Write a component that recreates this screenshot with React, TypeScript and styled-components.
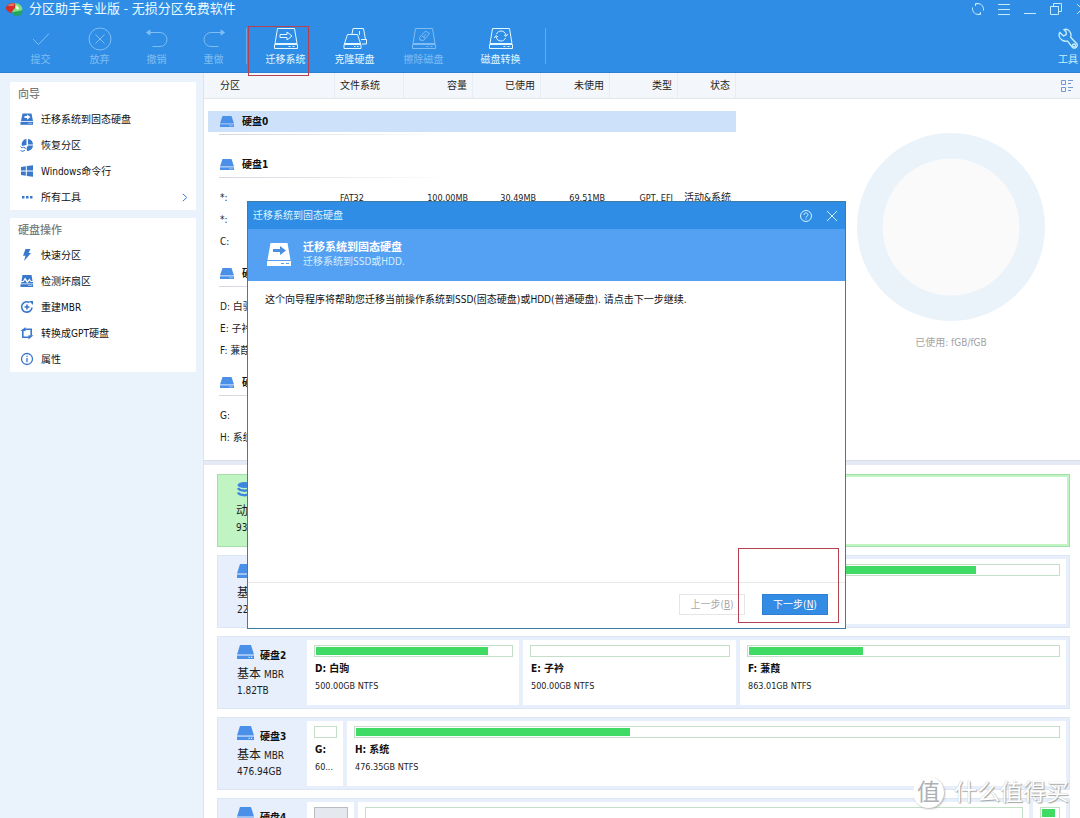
import React from 'react';
import styled, { createGlobalStyle, css } from 'styled-components';

const GlobalStyle = createGlobalStyle`
  *, *::before, *::after { box-sizing: border-box; }
  body { margin: 0; background: #fff; }
  body, button, table {
    font-family: "DejaVu Sans Condensed", "Noto Sans CJK SC", sans-serif;
    font-size: 10px;
    line-height: 14px;
    color: #1c1c1c;
  }
  button { background: none; border: 0; padding: 0; margin: 0; cursor: pointer; }
  svg { display: block; flex: none; }
`;

const Window = styled.div`
  position: relative;
  display: flex;
  flex-direction: column;
  height: 100vh;
  overflow: hidden;
  background: #fff;
`;

const TopBar = styled.header`
  flex: none;
  height: 73px;
  overflow: hidden;
  background: #2f8de6;
  border-bottom: 1px solid #2a7fd2;
`;

const TitleBar = styled.div`
  display: flex;
  align-items: center;
  height: 18px;
  padding-left: 5px;
`;

const WindowTitle = styled.h1`
  flex: 1;
  margin: 0 0 0 6px;
  font-size: 13px;
  line-height: 18px;
  font-weight: 400;
  color: #e9fbff;
  white-space: nowrap;
`;

const WindowControls = styled.div`
  display: flex;
  margin-right: -15px;
`;

const ControlButton = styled.button`
  display: flex;
  align-items: center;
  justify-content: center;
  width: 26px;
  height: 18px;
  color: #c5ecfb;
`;

const Toolbar = styled.nav`
  display: flex;
  height: 54px;
  padding: 9px 2px 0 12px;
`;

const ToolButton = styled.button<{ $wide?: boolean }>`
  display: flex;
  flex-direction: column;
  align-items: center;
  gap: 2px;
  width: ${(p) => (p.$wide ? 69 : 57)}px;
  height: 44px;
  color: #e4f8ff;
  white-space: nowrap;
  &:disabled { color: #80bdf2; cursor: default; }
`;

const ToolSeparator = styled.span`
  width: 1px;
  height: 36px;
  margin: 1px 4px 0;
  background: #62abee;
`;

const ToolGap = styled.span<{ $w: number }>`
  width: ${(p) => p.$w}px;
`;

const ToolsMenu = styled.button`
  display: flex;
  flex-direction: column;
  align-items: center;
  gap: 2px;
  height: 44px;
  margin-left: auto;
  color: #c9f1fb;
`;

const Body = styled.div`
  display: flex;
  flex: 1;
  min-height: 0;
`;

const Sidebar = styled.aside`
  display: flex;
  flex: none;
  flex-direction: column;
  gap: 8px;
  width: 204px;
  padding: 9px 7px 0 10px;
  background: #eaf2fc;
  border-right: 1px solid #d8e4f1;
`;

const SideCard = styled.section`
  background: #fff;
`;

const SideTitle = styled.h2`
  margin: 0;
  padding: 2px 8px 0;
  font-size: 11px;
  line-height: 22px;
  font-weight: 500;
  color: #7b7b7b;
`;

const SideItem = styled.button`
  display: flex;
  align-items: center;
  gap: 7px;
  width: 100%;
  height: 26px;
  padding: 0 8px 0 10px;
  color: #111;
  text-align: left;
  white-space: nowrap;
  & > svg { color: #3a78cb; }
  & > span { flex: 1; padding-top: 1px; }
`;

const Main = styled.main`
  display: flex;
  flex: 1;
  flex-direction: column;
  min-width: 0;
`;

const ListPanel = styled.section`
  display: flex;
  flex: none;
  padding-bottom: 13px;
  background: #fff;
`;

const headerStrip = css`
  height: 26px;
  background: #f3f6fb;
  border-bottom: 1px solid #e3e6ea;
`;

const PartitionTable = styled.table`
  flex: none;
  width: 532px;
  table-layout: fixed;
  border-collapse: separate;
  border-spacing: 0;
`;

const HeadCell = styled.th<{ $w: number; $left?: boolean; $first?: boolean }>`
  ${headerStrip}
  width: ${(p) => p.$w}px;
  padding: 0 5px 0 ${(p) => (p.$first ? 16 : 5)}px;
  border-right: 1px solid #e8ecf3;
  font-weight: 400;
  text-align: ${(p) => (p.$left || p.$first ? 'left' : 'right')};
`;

const Cell = styled.td<{ $left?: boolean; $first?: boolean }>`
  height: 22px;
  padding: 3px 5px 0 ${(p) => (p.$first ? 16 : 5)}px;
  font-size: 9px;
  text-align: ${(p) => (p.$left || p.$first ? 'left' : 'right')};
  white-space: nowrap;
  & > span { font-size: 10px; }
`;

const DiskCell = styled.td`
  height: 43px;
  padding: 2px 0 0;
`;

const DiskHeading = styled.div<{ $selected?: boolean }>`
  display: flex;
  align-items: center;
  gap: 8px;
  height: 21px;
  margin: 2px 0 0 4px;
  padding: 1px 0 0 12px;
  font-weight: 700;
  color: #111;
  background: ${(p) => (p.$selected ? '#cde1fb' : 'transparent')};
`;

const DiskRule = styled.div`
  height: 1px;
  margin: 2px 0 0 15px;
  width: 236px;
  background: linear-gradient(90deg, #d3d8de, #ffffff);
`;

const UsagePanel = styled.div`
  flex: 1;
  min-width: 0;
`;

const UsageHeader = styled.div`
  ${headerStrip}
  display: flex;
  align-items: center;
  justify-content: flex-end;
  padding-right: 7px;
`;

const Usage = styled.figure`
  display: flex;
  flex-direction: column;
  align-items: center;
  gap: 15px;
  margin: 0;
  padding: 34px 0 0 86px;
  color: #a3a3a3;
`;

const Splitter = styled.div`
  flex: none;
  height: 5px;
  background: #e6eaf4;
  border-top: 1px solid #d9deea;
`;

const DiskMap = styled.section`
  display: flex;
  flex: 1;
  flex-direction: column;
  gap: 8px;
  min-height: 0;
  overflow: hidden;
  padding: 9px 10px 0 13px;
`;

const DiskCard = styled.article<{ $dynamic?: boolean }>`
  display: flex;
  flex: none;
  gap: 4px;
  height: 73px;
  padding: ${(p) => (p.$dynamic ? 2 : 3)}px;
  background: ${(p) => (p.$dynamic ? '#c0f4c3' : '#e6effb')};
  border: 1px solid ${(p) => (p.$dynamic ? '#a5deac' : '#dce7f3')};
`;

const DiskLabel = styled.div`
  flex: none;
  width: 82px;
  padding: 5px 0 0 16px;
  line-height: 16px;
`;

const DiskName = styled.div`
  display: flex;
  gap: 6px;
  height: 21px;
  font-weight: 700;
  line-height: 22px;
  color: #111;
`;

const DiskKind = styled.div`
  & > span { font-size: 12px; }
`;

const Partition = styled.div<{ $grow?: number; $w?: number }>`
  flex: ${(p) => (p.$w ? `0 0 ${p.$w}px` : `${p.$grow ?? 1} 1 0`)};
  min-width: 0;
  overflow: hidden;
  padding: 5px 6px 0 7px;
  background: #fff;
  white-space: nowrap;
`;

const Bar = styled.div<{ $empty?: boolean }>`
  height: 12px;
  padding: 1px;
  background: ${(p) => (p.$empty ? '#e6e8f0' : '#fff')};
  border: 1px solid ${(p) => (p.$empty ? '#b9bcc2' : '#c3dfc8')};
`;

const Fill = styled.div`
  height: 8px;
  background: #3fdb64;
`;

const PartitionName = styled.div`
  margin: 5px 0 0 1px;
  font-weight: 700;
  color: #111;
`;

const PartitionSize = styled.div`
  margin: 3px 0 0 1px;
  font-size: 9px;
`;

const Dialog = styled.div`
  position: absolute;
  top: 201px;
  left: 247px;
  z-index: 2;
  display: flex;
  flex-direction: column;
  width: 599px;
  height: 428px;
  background: #fff;
  border: 1px solid #3c7da6;
`;

const DialogTitleBar = styled.div`
  display: flex;
  align-items: center;
  height: 27px;
  padding-left: 5px;
  background: #2f8de6;
  color: #d9f6ff;
`;

const DialogTitle = styled.span`
  flex: 1;
`;

const DialogBanner = styled.div`
  display: flex;
  align-items: center;
  gap: 12px;
  height: 52px;
  padding-left: 19px;
  background: #54a1f3;
  color: #d3ecff;
`;

const BannerTitle = styled.h2`
  margin: 0;
  font-size: 11px;
  line-height: 14px;
  font-weight: 700;
  color: #fff;
`;

const DialogText = styled.p`
  flex: 1;
  margin: 0;
  padding: 12px 17px;
  color: #111;
  white-space: nowrap;
`;

const DialogFooter = styled.div`
  display: flex;
  justify-content: flex-end;
  gap: 17px;
  height: 46px;
  padding: 11px 17px 0;
  border-top: 1px solid #e6e8ea;
`;

const DialogButton = styled.button`
  width: 66px;
  height: 21px;
  color: #fff;
  background: #338ce4;
  border: 1px solid #2f7fd4;
  &:disabled {
    color: #a9a9a9;
    background: #fff;
    border-color: #e3e5e6;
  }
`;

const DialogIconButton = styled(ControlButton)`
  height: 24px;
  color: #d3f4ff;
`;

const HighlightFrame = styled.div<{ $x: number; $y: number; $w: number; $h: number }>`
  position: absolute;
  z-index: 3;
  left: ${(p) => p.$x}px;
  top: ${(p) => p.$y}px;
  width: ${(p) => p.$w}px;
  height: ${(p) => p.$h}px;
  border: 1px solid #b5414f;
  pointer-events: none;
`;

const Watermark = styled.div`
  position: absolute;
  right: 11px;
  bottom: 10px;
  z-index: 4;
  display: flex;
  align-items: center;
  gap: 10px;
  font-size: 23px;
  line-height: 32px;
  color: #fff;
  text-shadow: 1px 1px 1px #a2a2a2, 0 0 1px #b4b4b4;
`;

const WatermarkSeal = styled.span`
  width: 31px;
  height: 31px;
  border-radius: 50%;
  background: #fff;
  box-shadow: 1px 1px 2px #b4b4b4;
  color: #aeb0b3;
  font-size: 23px;
  line-height: 30px;
  text-align: center;
  text-shadow: none;
`;

type IconProps = { children: React.ReactNode; w?: number; h?: number; box?: string; sw?: number };
const Line = ({ children, w = 24, h = 24, box, sw = 1 }: IconProps) => (
  <svg width={w} height={h} viewBox={box ?? `0 0 ${w} ${h}`} fill="none" stroke="currentColor" strokeWidth={sw} aria-hidden="true">
    {children}
  </svg>
);
const Solid = ({ children, w = 14, h = 14 }: IconProps) => (
  <svg width={w} height={h} viewBox={`0 0 ${w} ${h}`} fill="currentColor" aria-hidden="true">
    {children}
  </svg>
);

const LogoIcon = () => (
  <svg width="18" height="16" viewBox="0 0 18 16" aria-hidden="true">
    <ellipse cx="11.500" cy="7.500" rx="6" ry="5" fill="#7be07c" transform="rotate(28 11.500 7.500)" />
    <path d="M7 12c2-2 7-1 10.500-3 .5 3-2 6-5.500 6-2.500 0-4.500-1.500-5-3z" fill="#23a35c" />
    <path d="M1 6.500C2 3 6 1.500 10 2.500l.5 3.500L6 12C3 11 .5 9 1 6.500z" fill="#d42d2c" />
    <path d="M2.500 5C4.500 2.500 7 2 9.500 2.800L8.500 5z" fill="#e8785c" />
    <path d="M10 5.500l2-1 2.500 3-2.500 1.500z" fill="#e4f9dc" />
  </svg>
);

const DriveShape = () => (
  <>
    <path d="M3.500 1.500h17l2.500 15H1z" />
    <path d="M.5 17.500h23v4H.5z" />
    <path d="M1 16.500h22M14.500 19.500h2M18.500 19.500h2" />
  </>
);

const MigrateIcon = () => (
  <Line>
    <DriveShape />
    <path d="M6 7.500h7V5l5 4-5 4v-2.500H6z" />
  </Line>
);
const CloneIcon = () => (
  <Line>
    <path d="M9 7l1-5.500h10.500l2 11M18 12.500h5.500v4.500H19M16.500 4v4" />
    <path d="M4.500 7.500h10l3 9H1.500zM1 17.500h17v4H1zM1.500 16.500h16M11 19.500h1.500M14 19.500h1.500" />
  </Line>
);
const WipeIcon = () => (
  <Line>
    <DriveShape />
    <path d="M7.500 10.500l6-6.500 4 2.500-6 7-3.500-.5zM10 9l3.500 2.500M11.500 10l2.500-3" />
  </Line>
);
const ConvertIcon = () => (
  <Line>
    <DriveShape />
    <path d="M7.500 7C8.500 5 10 4 12 4c2.500 0 4.500 1.500 5 4.500M16.500 11c-1 2-2.500 3-4.500 3-2.500 0-4.500-1.500-5-4.500" />
    <path d="M15 8l2 1.500L18.700 7M9 10L7 8.500 5.300 11" />
  </Line>
);
const CheckIcon = () => <Line><path d="M4 12l5.500 5.500L20 6.500" /></Line>;
const DiscardIcon = () => <Line><circle cx="12" cy="12" r="11" /><path d="M7.500 7.500l9 9M16.500 7.500l-9 9" /></Line>;
const UndoIcon = () => <Line><path d="M2 5.500h13a7 7 0 0 1 0 14H7.500" /><path d="M5 3v5L1.500 5.500z" fill="currentColor" /></Line>;
const RedoIcon = () => <Line><path d="M22 5.500H9a7 7 0 0 0 0 14h7.500" /><path d="M19 3v5l3.500-2.500z" fill="currentColor" /></Line>;
const WrenchIcon = () => (
  <Line w={20} sw={1.3}>
    <path d="M6 2.500C9 1.500 12 3.500 12.800 6.500c.3 1.500.2 2.500-.2 3.800l6 6.200c2 2.500-1.500 6-4 4l-5.100-6.500C6 15 1.500 12.500 1 8.500c0-1.500.3-2.500.8-3L5.500 9l2.700-1.500V5z" />
    <circle cx="16" cy="18.500" r="1.500" />
  </Line>
);

const SyncIcon = () => (
  <Line w={14} h={14}>
    <path d="M5 2C9 .5 13 3.500 12.500 8.500M9 12C5 13.500 1 10.500 1.500 5.500" />
    <path d="M7.500 1.500h-3v2.500M6.500 12.500h3V10" />
  </Line>
);
const MenuIcon = () => <Line w={12} h={12}><path d="M0 1.500h12M0 6.500h12M0 11.500h12" /></Line>;
const MinimizeIcon = () => <Line w={12} h={12}><path d="M0 10.500h12" /></Line>;
const RestoreIcon = () => <Line w={12} h={12}><path d="M.5 3.500h8v8h-8zM3.500 3V.5h8v8H9" /></Line>;
const CloseIcon = () => <Line w={12} h={12}><path d="M1 1l10 10M11 1L1 11" /></Line>;
const HelpIcon = () => (
  <Line w={12} h={12}>
    <circle cx="6" cy="6" r="5.500" />
    <path d="M4 5c0-3 4-2.500 4 0 0 1-2 1.300-2 2.500M6 8.500v1" />
  </Line>
);

const ViewIcon = () => (
  <svg width="12" height="13" viewBox="0 0 12 13" fill="none" stroke="#6f9bd0" aria-hidden="true">
    <path d="M.5 1.500h4v4h-4zM.5 8.500h4v4h-4zM7 1.500h5M7 4.500h3M7 8.500h5M7 11.500h3" />
  </svg>
);

const DriveIcon = ({ tall = false }: { tall?: boolean }) => (
  <svg width={tall ? 17 : 14} height={tall ? 14 : 11} viewBox="0 0 14 11" preserveAspectRatio="none" aria-hidden="true">
    <path d="M2.500 0h9L14 7.500H0z" fill="#4a8fe8" />
    <path d="M0 8.300h14V11H0z" fill="#4a8fe8" />
    <path d="M9.500 9.200h1v1h-1zM11.500 9.200h1v1h-1z" fill="#dcebfd" />
  </svg>
);
const CylinderIcon = () => (
  <svg width="17" height="15" viewBox="0 0 17 15" fill="none" aria-hidden="true">
    <ellipse cx="8.500" cy="3" rx="7" ry="3" fill="#3d86e0" />
    <path d="M2 6c2 3.500 11 3.500 13 0M2 10.500c2 3.500 11 3.500 13 0" stroke="#3d86e0" strokeWidth="2.500" />
  </svg>
);
const BannerDriveIcon = () => (
  <svg width="24" height="24" viewBox="0 0 24 24" aria-hidden="true">
    <path d="M3.500 0h17L23.500 17H.5z" fill="#fff" />
    <path d="M0 18h24v5H0z" fill="#fff" />
    <path d="M6 6h7V3l6 4.500-6 4.500V9H6z" fill="#4a90e2" />
    <path d="M14 20h3v1h-3zM19 20h3v1h-3zM0 17h24v1H0z" fill="#54a1f3" />
  </svg>
);

const SideMigrate = () => (
  <Solid><path fillRule="evenodd" d="M2.500 1.500h9L13 9H1zM4.500 4v2H7v1.800L10.500 5 7 2.500V4z" /><path d="M.5 9.800h12.500v3H.5z" /><path d="M8.500 10.800h1v1h-1zM10.500 10.800h1v1h-1z" fill="#fff" /></Solid>
);
const SideRecover = () => (
  <Solid>
    <path d="M6.500 1v6L2 8C1 4.500 3 1.500 6.500 1zM8 1c3 .3 5 2.500 5 5.500H8zM13 7.500c-.2 3-2.500 5.500-6 5.500L6.500 10 8 7.500z" />
    <path d="M.5 8.500L2 10c1-1 2.500-1 3.500.3L4 9.500M.5 12.500c1.500 1 3.500 1 4.500-.5" fill="none" stroke="currentColor" />
  </Solid>
);
const SideWindows = () => (
  <Solid><path d="M1 3l4.800-.7v4.200H1zM6.800 2.100L13 1.200v5.300H6.800zM1 7.500h4.800v4.200L1 11zM6.800 7.500H13v5.300l-6.200-.9z" /></Solid>
);
const SideMore = () => <Solid><path d="M2 6h2.500v2.500H2zM6 6h2.500v2.500H6zM10 6h2.500v2.500H10z" /></Solid>;
const SideBolt = () => <Solid><path d="M5.500 1h5L8.500 5H11L4 13l1.500-5.200H3z" /></Solid>;
const SideScan = () => (
  <Solid><path fillRule="evenodd" d="M2.500 1h9l1 6h-1.500L9.500 4.500 7.500 7 5 3.500 3 7H1.500z" /><path d="M1.500 8h2L5 6l2.300 3.200L9.500 6.500l1.200 1.500H13v1.500H1zM.5 10.300H13V13H.5z" /><path d="M8.500 11h1v1h-1zM10.500 11h1v1h-1z" fill="#fff" /></Solid>
);
const SideRebuild = () => (
  <Line w={14} h={14} sw={1.6}><path d="M12 7.500A5.200 5.200 0 1 1 9.500 2.500M7 4.500v5M4.500 7h5" /><path d="M9 1h4v4z" fill="currentColor" stroke="none" /></Line>
);
const SideConvert = () => (
  <Line w={14} h={14} sw={1.6}>
    <path d="M2.800 4v7.200H9M5 3.300h6.200v6.200" />
    <path d="M5.500 1v4.600L2.800 3.300zM8.500 9v4.500l2.700-2.300zM.5 5l2.300-2L5 5zM9 9.300h4.500l-2.300 2z" fill="currentColor" stroke="none" />
  </Line>
);
const SideInfo = () => (
  <Line w={14} h={14} sw={1.3}><circle cx="7" cy="7" r="5.500" /><path d="M7 6v4.200M7 3.700v1.300" /></Line>
);
const ChevronIcon = () => <Line w={6} h={9}><path d="M.8.800l4 3.700-4 3.700" /></Line>;

const wizardItems = [
  { icon: <SideMigrate />, label: '迁移系统到固态硬盘' },
  { icon: <SideRecover />, label: '恢复分区' },
  { icon: <SideWindows />, label: 'Windows命令行' },
  { icon: <SideMore />, label: '所有工具', more: true },
];
const diskItems = [
  { icon: <SideBolt />, label: '快速分区' },
  { icon: <SideScan />, label: '检测坏扇区' },
  { icon: <SideRebuild />, label: '重建MBR' },
  { icon: <SideConvert />, label: '转换成GPT硬盘' },
  { icon: <SideInfo />, label: '属性' },
];

const SideGroup = ({ title, items }: { title: string; items: { icon: React.ReactNode; label: string; more?: boolean }[] }) => (
  <SideCard>
    <SideTitle>{title}</SideTitle>
    {items.map((item) => (
      <SideItem key={item.label} type="button">
        {item.icon}
        <span>{item.label}</span>
        {item.more && <ChevronIcon />}
      </SideItem>
    ))}
  </SideCard>
);

const groups: { disk: string; selected?: boolean; rows: string[][] }[] = [
  { disk: '硬盘0', selected: true, rows: [] },
  {
    disk: '硬盘1',
    rows: [['*:', 'FAT32', '100.00MB', '30.49MB', '69.51MB', 'GPT, EFI', '活动&系统'], ['*:'], ['C:']],
  },
  { disk: '硬盘2', rows: [['D: 白驹'], ['E: 子衿'], ['F: 蒹葭']] },
  { disk: '硬盘3', rows: [['G:'], ['H: 系统']] },
];

const DiskInfo = ({ name, kind, scheme, size, icon }: { name: string; kind: string; scheme?: string; size: string; icon?: React.ReactNode }) => (
  <DiskLabel>
    <DiskName>{icon ?? <DriveIcon tall />}{name}</DiskName>
    <DiskKind><span>{kind}</span> {scheme}</DiskKind>
    <div>{size}</div>
  </DiskLabel>
);

type PartProps = { name?: string; size?: string; used?: number; grow?: number; w?: number; empty?: boolean };
const Part = ({ name, size, used = 0, grow, w, empty }: PartProps) => (
  <Partition $grow={grow} $w={w}>
    <Bar $empty={empty}>{used > 0 && <Fill style={{ width: `${used}%` }} />}</Bar>
    {name && <PartitionName>{name}</PartitionName>}
    {size && <PartitionSize>{size}</PartitionSize>}
  </Partition>
);

export default function App() {
  return (
    <Window>
      <GlobalStyle />
      <TopBar>
        <TitleBar>
          <LogoIcon />
          <WindowTitle>分区助手专业版 - 无损分区免费软件</WindowTitle>
          <WindowControls>
            <ControlButton type="button" aria-label="刷新"><SyncIcon /></ControlButton>
            <ControlButton type="button" aria-label="菜单"><MenuIcon /></ControlButton>
            <ControlButton type="button" aria-label="最小化"><MinimizeIcon /></ControlButton>
            <ControlButton type="button" aria-label="还原"><RestoreIcon /></ControlButton>
            <ControlButton type="button" aria-label="关闭"><CloseIcon /></ControlButton>
          </WindowControls>
        </TitleBar>
        <Toolbar>
          <ToolButton type="button" disabled><CheckIcon />提交</ToolButton>
          <ToolGap $w={2} />
          <ToolButton type="button" disabled><DiscardIcon />放弃</ToolButton>
          <ToolButton type="button" disabled><UndoIcon />撤销</ToolButton>
          <ToolButton type="button" disabled><RedoIcon />重做</ToolButton>
          <ToolSeparator />
          <ToolButton type="button" $wide><MigrateIcon />迁移系统</ToolButton>
          <ToolButton type="button" $wide><CloneIcon />克隆硬盘</ToolButton>
          <ToolButton type="button" $wide disabled><WipeIcon />擦除磁盘</ToolButton>
          <ToolGap $w={8} />
          <ToolButton type="button" $wide><ConvertIcon />磁盘转换</ToolButton>
          <ToolGap $w={6} />
          <ToolSeparator />
          <ToolsMenu type="button"><WrenchIcon />工具</ToolsMenu>
        </Toolbar>
      </TopBar>

      <Body>
        <Sidebar>
          <SideGroup title="向导" items={wizardItems} />
          <SideGroup title="硬盘操作" items={diskItems} />
        </Sidebar>

        <Main>
          <ListPanel>
            <PartitionTable>
              <thead>
                <tr>
                  <HeadCell $w={131} $first>分区</HeadCell>
                  <HeadCell $w={69} $left>文件系统</HeadCell>
                  <HeadCell $w={69}>容量</HeadCell>
                  <HeadCell $w={68}>已使用</HeadCell>
                  <HeadCell $w={69}>未使用</HeadCell>
                  <HeadCell $w={68}>类型</HeadCell>
                  <HeadCell $w={58}>状态</HeadCell>
                </tr>
              </thead>
              {groups.map((group) => (
                <tbody key={group.disk}>
                  <tr>
                    <DiskCell colSpan={7}>
                      <DiskHeading $selected={group.selected}><DriveIcon />{group.disk}</DiskHeading>
                      <DiskRule />
                    </DiskCell>
                  </tr>
                  {group.rows.map((row, i) => (
                    <tr key={i}>
                      {Array.from({ length: 7 }, (_, c) => (
                        <Cell key={c} $first={c === 0} $left={c === 1}>
                          {c === 6 || c === 0 ? <span>{row[c]}</span> : row[c]}
                        </Cell>
                      ))}
                    </tr>
                  ))}
                </tbody>
              ))}
            </PartitionTable>
            <UsagePanel>
              <UsageHeader><ViewIcon /></UsageHeader>
              <Usage>
                <svg width="188" height="188" viewBox="0 0 188 188" aria-hidden="true">
                  <circle cx="94" cy="94" r="94" fill="#eaf2fa" />
                  <circle cx="94" cy="94" r="68.500" fill="#fafafa" />
                </svg>
                <figcaption>已使用: fGB/fGB</figcaption>
              </Usage>
            </UsagePanel>
          </ListPanel>

          <Splitter />

          <DiskMap>
            <DiskCard $dynamic>
              <DiskInfo name="硬盘0" kind="动态" scheme="MBR" size="931.51GB" icon={<CylinderIcon />} />
              <Partition />
            </DiskCard>
            <DiskCard>
              <DiskInfo name="硬盘1" kind="基本" scheme="GPT" size="223.57GB" />
              <Part used={89} />
            </DiskCard>
            <DiskCard>
              <DiskInfo name="硬盘2" kind="基本" scheme="MBR" size="1.82TB" />
              <Part name="D: 白驹" size="500.00GB NTFS" used={88} grow={199} />
              <Part name="E: 子衿" size="500.00GB NTFS" grow={200} />
              <Part name="F: 蒹葭" size="863.01GB NTFS" used={37} grow={313} />
            </DiskCard>
            <DiskCard>
              <DiskInfo name="硬盘3" kind="基本" scheme="MBR" size="476.94GB" />
              <Part name="G:" size="60..." w={36} />
              <Part name="H: 系统" size="476.35GB NTFS" used={39} />
            </DiskCard>
            <DiskCard>
              <DiskInfo name="硬盘4" kind="基本" scheme="MBR" size="14.91GB" />
              <Part w={47} empty />
              <Part />
              <Part w={33} used={80} />
            </DiskCard>
          </DiskMap>
        </Main>
      </Body>

      <Dialog role="dialog" aria-label="迁移系统到固态硬盘">
        <DialogTitleBar>
          <DialogTitle>迁移系统到固态硬盘</DialogTitle>
          <DialogIconButton type="button" aria-label="帮助"><HelpIcon /></DialogIconButton>
          <DialogIconButton type="button" aria-label="关闭"><CloseIcon /></DialogIconButton>
        </DialogTitleBar>
        <DialogBanner>
          <BannerDriveIcon />
          <div>
            <BannerTitle>迁移系统到固态硬盘</BannerTitle>
            迁移系统到SSD或HDD.
          </div>
        </DialogBanner>
        <DialogText>这个向导程序将帮助您迁移当前操作系统到SSD(固态硬盘)或HDD(普通硬盘). 请点击下一步继续.</DialogText>
        <DialogFooter>
          <DialogButton type="button" disabled>上一步(<u>B</u>)</DialogButton>
          <DialogButton type="button">下一步(<u>N</u>)</DialogButton>
        </DialogFooter>
      </Dialog>

      <HighlightFrame $x={248} $y={26} $w={61} $h={50} />
      <HighlightFrame $x={738} $y={548} $w={101} $h={75} />

      <Watermark aria-hidden="true">
        <WatermarkSeal>值</WatermarkSeal>
        什么值得买
      </Watermark>
    </Window>
  );
}
